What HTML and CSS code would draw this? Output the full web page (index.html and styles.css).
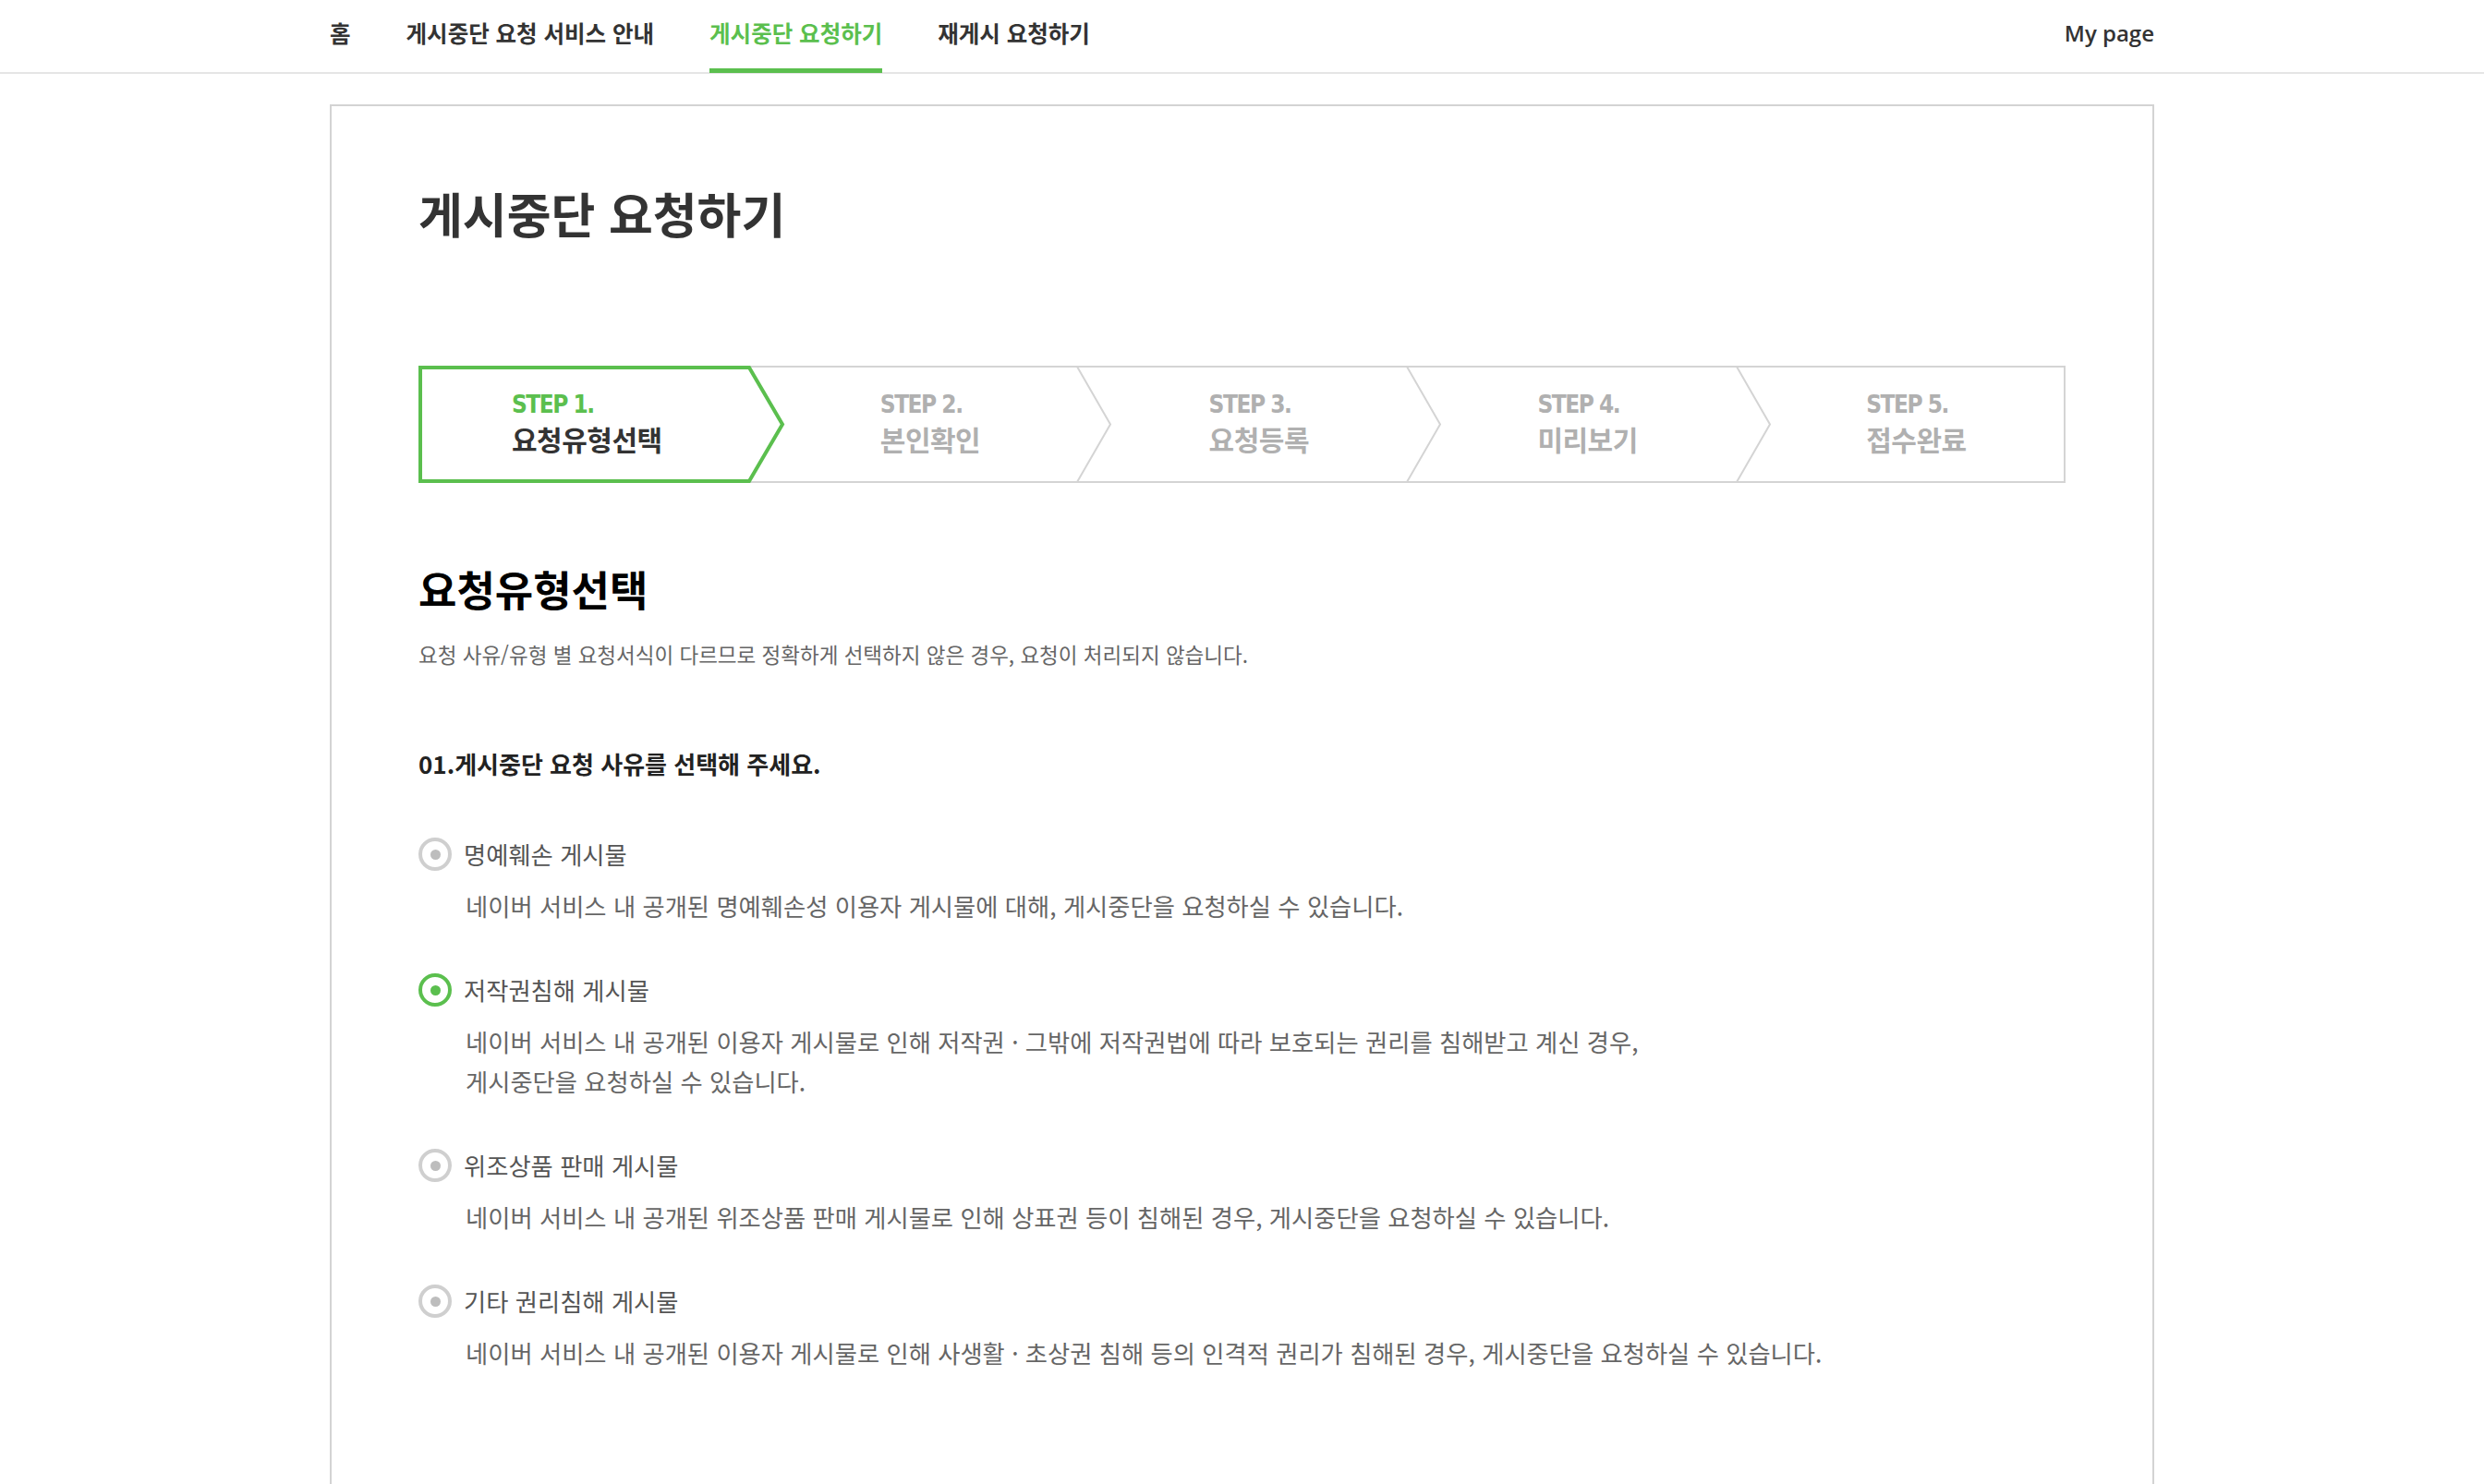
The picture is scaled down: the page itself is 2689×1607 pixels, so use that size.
FILE: index.html
```html
<!DOCTYPE html>
<html lang="ko">
<head>
<meta charset="utf-8">
<title>게시중단 요청하기</title>
<link rel="stylesheet" href="styles.css">
</head>
<body>
<header class="gnb">
  <div class="gnb-inner">
    <nav class="gnb-menu">
      <a class="gnb-link" href="#">홈</a>
      <a class="gnb-link" href="#">게시중단 요청 서비스 안내</a>
      <a class="gnb-link is-active" href="#">게시중단 요청하기</a>
      <a class="gnb-link" href="#">재게시 요청하기</a>
    </nav>
    <a class="gnb-my" href="#">My page</a>
  </div>
</header>

<main class="panel">
  <h1 class="panel-title">게시중단 요청하기</h1>

  <ol class="steps">
    <svg class="steps-lines" width="1783" height="127" viewBox="0 0 1783 127" aria-hidden="true">
      <polyline points="713,1 749,63.5 713,126" fill="none" stroke="#d4d4d4" stroke-width="2"/>
      <polyline points="1070,1 1106,63.5 1070,126" fill="none" stroke="#d4d4d4" stroke-width="2"/>
      <polyline points="1427,1 1463,63.5 1427,126" fill="none" stroke="#d4d4d4" stroke-width="2"/>
      <polygon points="2,2 358,2 394,63.5 358,125 2,125" fill="#fff" stroke="#5bbf4e" stroke-width="4" stroke-linejoin="miter"/>
    </svg>
    <li class="step is-current"><span class="step-no">STEP 1.</span><span class="step-name">요청유형선택</span></li>
    <li class="step"><span class="step-no">STEP 2.</span><span class="step-name">본인확인</span></li>
    <li class="step"><span class="step-no">STEP 3.</span><span class="step-name">요청등록</span></li>
    <li class="step"><span class="step-no">STEP 4.</span><span class="step-name">미리보기</span></li>
    <li class="step"><span class="step-no">STEP 5.</span><span class="step-name">접수완료</span></li>
  </ol>

  <h2 class="section-title">요청유형선택</h2>
  <p class="section-desc">요청 사유/유형 별 요청서식이 다르므로 정확하게 선택하지 않은 경우, 요청이 처리되지 않습니다.</p>

  <h3 class="question">01.게시중단 요청 사유를 선택해 주세요.</h3>

  <ul class="options">
    <li class="option">
      <label class="option-row"><span class="radio"></span><span class="option-label">명예훼손 게시물</span></label>
      <p class="option-desc">네이버 서비스 내 공개된 명예훼손성 이용자 게시물에 대해, 게시중단을 요청하실 수 있습니다.</p>
    </li>
    <li class="option">
      <label class="option-row"><span class="radio is-checked"></span><span class="option-label">저작권침해 게시물</span></label>
      <p class="option-desc">네이버 서비스 내 공개된 이용자 게시물로 인해 저작권 · 그밖에 저작권법에 따라 보호되는 권리를 침해받고 계신 경우,<br>게시중단을 요청하실 수 있습니다.</p>
    </li>
    <li class="option">
      <label class="option-row"><span class="radio"></span><span class="option-label">위조상품 판매 게시물</span></label>
      <p class="option-desc">네이버 서비스 내 공개된 위조상품 판매 게시물로 인해 상표권 등이 침해된 경우, 게시중단을 요청하실 수 있습니다.</p>
    </li>
    <li class="option">
      <label class="option-row"><span class="radio"></span><span class="option-label">기타 권리침해 게시물</span></label>
      <p class="option-desc">네이버 서비스 내 공개된 이용자 게시물로 인해 사생활 · 초상권 침해 등의 인격적 권리가 침해된 경우, 게시중단을 요청하실 수 있습니다.</p>
    </li>
  </ul>
</main>
</body>
</html>
```

FILE: styles.css
```css
* { box-sizing: border-box; }

html, body {
  margin: 0;
  padding: 0;
  background: #fff;
}

body {
  font-family: "Noto Sans CJK KR", "Noto Sans", sans-serif;
  color: #333;
}

a { text-decoration: none; color: inherit; }

.gnb {
  height: 80px;
  border-bottom: 2px solid #e5e5e5;
}

.gnb-inner {
  width: 1975px;
  margin: 0 auto;
  height: 78px;
  display: flex;
  justify-content: space-between;
  align-items: flex-start;
}

.gnb-menu {
  display: flex;
  gap: 60px;
}

.gnb-link {
  height: 79px;
  padding-bottom: 8px;
  display: flex;
  align-items: center;
  font-size: 24.5px;
  font-weight: 700;
  color: #333;
}

.gnb-link.is-active {
  color: #5bbf4e;
  padding-bottom: 3px;
  border-bottom: 5px solid #5bbf4e;
}

.gnb-my {
  height: 71px;
  display: flex;
  align-items: center;
  font-family: "Open Sans", "Noto Sans", sans-serif;
  font-size: 24px;
  font-weight: 600;
  color: #333;
}

.panel {
  width: 1975px;
  margin: 33px auto 0;
  border: 2px solid #d3d3d3;
  border-bottom: 0;
  padding: 85px 94px 220px;
}

.panel-title {
  margin: 0;
  font-size: 52px;
  line-height: 62px;
  font-weight: 700;
  color: #333;
}

.steps {
  position: relative;
  list-style: none;
  margin: 134px 0 0;
  padding: 0;
  height: 127px;
  border: 2px solid #d4d4d4;
  display: flex;
}

.steps-lines {
  position: absolute;
  top: -2px;
  left: -2px;
  z-index: 0;
}

.step {
  position: relative;
  z-index: 1;
  flex: none;
  width: 20%;
  display: flex;
  flex-direction: column;
  padding: 25px 0 0 142px;
  color: #b0b0b0;
}

.step:first-of-type { padding-left: 99px; }

.step-no {
  font-family: "Liberation Sans Narrow", "DejaVu Sans Condensed", "Open Sans", sans-serif;
  font-stretch: condensed;
  font-size: 26px;
  line-height: 30px;
  font-weight: 700;
  letter-spacing: -1.5px;
}

.step-name {
  margin-top: 3px;
  font-size: 30px;
  line-height: 38px;
  font-weight: 700;
  letter-spacing: -0.5px;
}

.step.is-current .step-no { color: #5bbf4e; }
.step.is-current .step-name { color: #333; }

.section-title {
  margin: 88px 0 0;
  font-size: 45px;
  line-height: 54px;
  font-weight: 700;
  color: #000;
}

.section-desc {
  margin: 28px 0 0;
  font-size: 22.5px;
  line-height: 30px;
  color: #666;
}

.question {
  margin: 87px 0 0;
  font-size: 26px;
  line-height: 34px;
  font-weight: 700;
  color: #222;
}

.options {
  list-style: none;
  margin: 63px 0 0;
  padding: 0;
  display: flex;
  flex-direction: column;
  gap: 52px;
}

.option-row {
  display: flex;
  align-items: center;
  gap: 13px;
  height: 36px;
}

.radio {
  position: relative;
  width: 36px;
  height: 36px;
  border-radius: 50%;
  border: 4px solid #cfcfcf;
  flex: none;
}

.radio::after {
  content: "";
  position: absolute;
  left: 50%;
  top: 50%;
  width: 11px;
  height: 11px;
  margin: -5.5px 0 0 -5.5px;
  border-radius: 50%;
  background: #bdbdbd;
}

.radio.is-checked { border-color: #5bbf4e; }
.radio.is-checked::after { background: #5bbf4e; }

.option-label {
  font-size: 26.3px;
  line-height: 36px;
  color: #555;
}

.option-desc {
  margin: 16px 0 0;
  padding-left: 51px;
  font-size: 26.3px;
  line-height: 43px;
  color: #666;
}
```
